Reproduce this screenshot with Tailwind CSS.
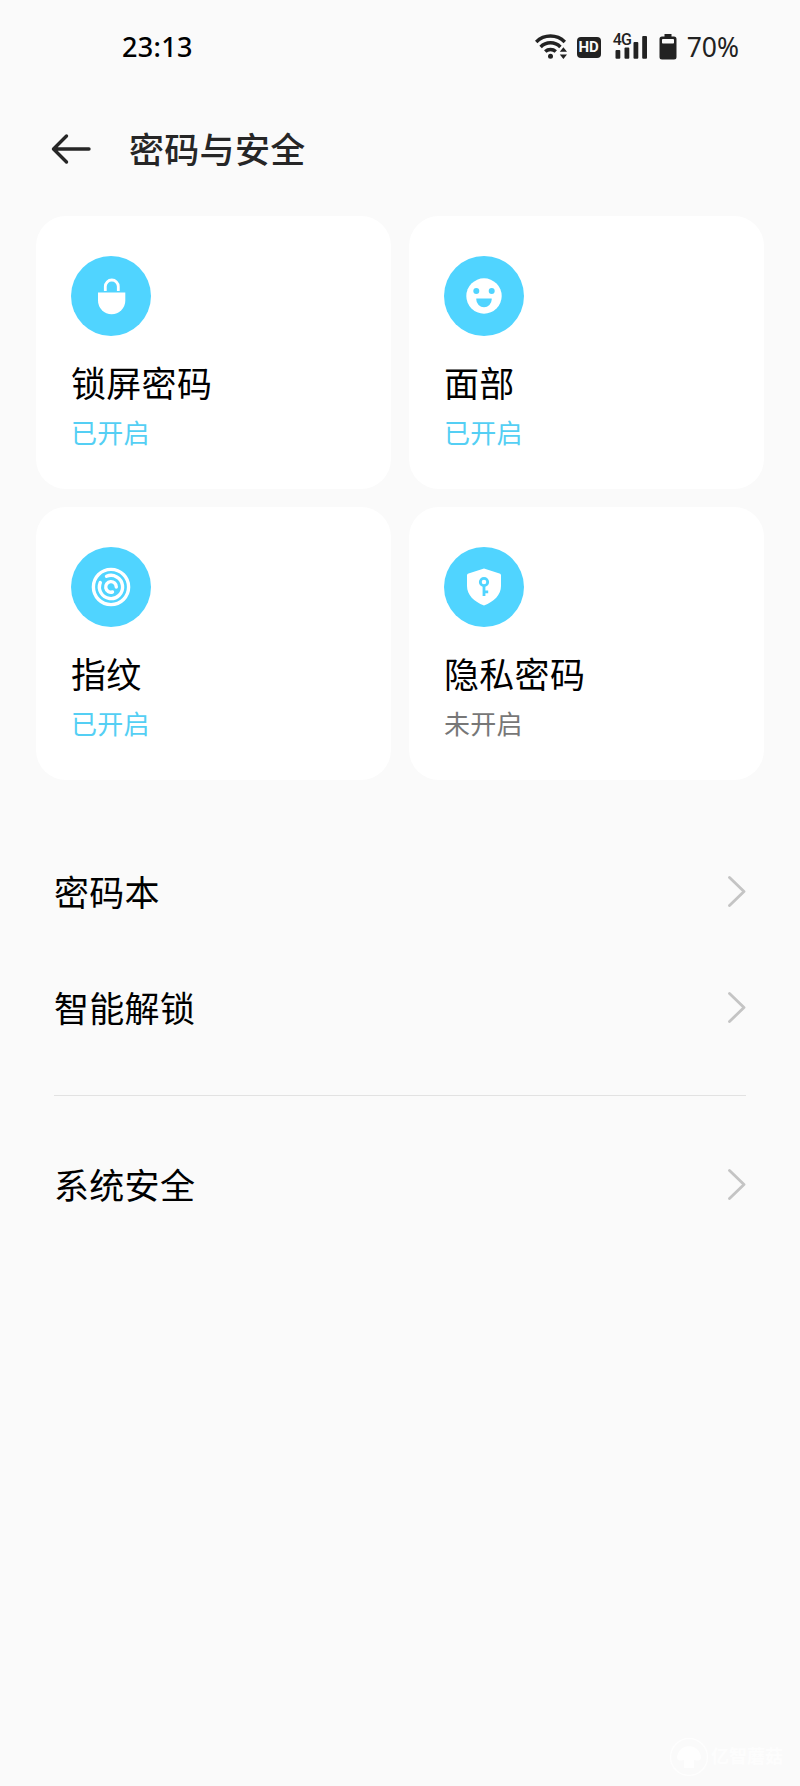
<!doctype html>
<html lang="zh-CN">
  <head>
    <meta charset="UTF-8" />
    <meta name="viewport" content="width=device-width, initial-scale=1.0" />
    <title>密码与安全</title>
    <script src="https://cdn.jsdelivr.net/npm/@tailwindcss/browser@4"></script>
  </head>

  <body class="bg-[#fafafa] h-[1786px] flex flex-col overflow-hidden text-black font-['Noto_Sans_CJK_SC',sans-serif]">
    <!-- Status bar -->
    <div class="h-[94px] shrink-0 flex items-center justify-between pl-[122px] pr-[61px] font-['Noto_Sans',sans-serif]">
      <span class="pb-px text-[27px] leading-none font-medium tracking-[0.3px]">23:13</span>
      <div class="flex items-center text-[#222]">
        <svg class="w-8 h-7" viewBox="0 0 32 28" fill="none" stroke="currentColor" stroke-width="3.5">
          <path d="M1.2 8.9a20.5 20.5 0 0 1 28.6 0" />
          <path d="M5.6 13.9a14 14 0 0 1 19.8 0" />
          <path d="M10.2 18.500a8 8 0 0 1 10.600 0" />
          <circle cx="15.5" cy="23.3" r="2.5" fill="currentColor" stroke="none" />
          <path d="M24.8 18.8l3.600-4.500 3.600 4.500zM24.800 21.400l3.600 4.500 3.600-4.500z" fill="currentColor" stroke="none" />
        </svg>
        <span class="ml-[10px] w-6 h-[21px] rounded bg-[#222] text-[#fafafa] text-[15px] leading-[21px] font-bold text-center font-[Roboto,sans-serif]">HD</span>
        <div class="ml-[12px] relative w-[34px] h-7">
          <svg class="w-[34px] h-7" viewBox="0 0 34 28" fill="currentColor">
            <rect x="2.5" y="17" width="4.8" height="8.8" rx="1" />
            <rect x="11.500" y="14.500" width="4.800" height="11.300" rx="1" />
            <rect x="20.500" y="9" width="4.800" height="16.800" rx="1" />
            <rect x="29.200" y="3" width="4.800" height="22.800" rx="1" />
          </svg>
          <span class="absolute left-0 -top-px text-[16px] leading-[16px] font-medium tracking-[-0.8px] font-[Roboto,sans-serif]">4G</span>
        </div>
        <svg class="ml-[12px] w-[18px] h-7" viewBox="0 0 18 28">
          <path d="M5.5 1h7v2.5H15A2.5 2.5 0 0 1 17.5 6v18a2.5 2.5 0 0 1-2.5 2.5H3A2.5 2.5 0 0 1 .5 24V6A2.5 2.5 0 0 1 3 3.5h2.5z" fill="currentColor" />
          <rect x="3" y="6" width="12" height="4.5" rx=".8" fill="#fafafa" />
        </svg>
        <span class="ml-[10px] text-[26.5px] leading-none">70%</span>
      </div>
    </div>

    <!-- Title bar -->
    <header class="h-[110px] shrink-0 flex items-center pl-[51px] text-[#262626]">
      <svg class="w-10 h-8" viewBox="0 0 40 32" fill="none" stroke="currentColor" stroke-width="3.4" stroke-linecap="round" stroke-linejoin="round">
        <path d="M38 16H3M15.500 3L2.500 16l13 13" />
      </svg>
      <h1 class="ml-[38px] pb-[3px] text-[35px] tracking-[0.3px] leading-none font-medium">密码与安全</h1>
    </header>

    <main class="flex flex-col">
      <section class="grid grid-cols-2 gap-[18px] px-9 pt-3">
        <div class="h-[273px] rounded-[30px] bg-white pl-[35px] pt-10">
          <svg class="size-20" viewBox="0 0 80 80">
            <circle cx="40" cy="40" r="40" fill="#50d4ff" />
            <path d="M34.3 35v-4.5a6.5 6.5 0 0 1 13 0V35" fill="none" stroke="#fff" stroke-width="2.8" />
            <path d="M27 36.5h27.3v8a13.65 13.65 0 0 1-27.3 0z" fill="#fff" />
          </svg>
          <h2 class="mt-7 text-[35px] tracking-[0.3px] leading-9">锁屏密码</h2>
          <p class="mt-[18px] text-[26px] tracking-[0.2px] leading-7 text-[#54cff4]">已开启</p>
        </div>

        <div class="h-[273px] rounded-[30px] bg-white pl-[35px] pt-10">
          <svg class="size-20" viewBox="0 0 80 80">
            <circle cx="40" cy="40" r="40" fill="#50d4ff" />
            <circle cx="40" cy="40" r="17.7" fill="#fff" />
            <g fill="#50d4ff">
              <circle cx="32.3" cy="35" r="3" />
              <circle cx="47.7" cy="35" r="3" />
              <path d="M32.3 42.5h15.4v1a7.7 7.7 0 0 1-15.4 0z" />
            </g>
          </svg>
          <h2 class="mt-7 text-[35px] tracking-[0.3px] leading-9">面部</h2>
          <p class="mt-[18px] text-[26px] tracking-[0.2px] leading-7 text-[#54cff4]">已开启</p>
        </div>

        <div class="h-[273px] rounded-[30px] bg-white pl-[35px] pt-10">
          <svg class="size-20" viewBox="0 0 80 80">
            <circle cx="40" cy="40" r="40" fill="#50d4ff" />
            <g fill="none" stroke="#fff" stroke-width="3.4" stroke-linecap="round">
              <circle cx="40" cy="40" r="17.6" />
              <path d="M35.5 29.3A11.6 11.6 0 1 1 29.3 35.5" />
              <path d="M41.5 45A5.3 5.3 0 1 1 45.3 40" />
            </g>
          </svg>
          <h2 class="mt-7 text-[35px] tracking-[0.3px] leading-9">指纹</h2>
          <p class="mt-[18px] text-[26px] tracking-[0.2px] leading-7 text-[#54cff4]">已开启</p>
        </div>

        <div class="h-[273px] rounded-[30px] bg-white pl-[35px] pt-10">
          <svg class="size-20" viewBox="0 0 80 80">
            <circle cx="40" cy="40" r="40" fill="#50d4ff" />
            <path d="M40 21.5l15.5 5c1 .3 1.500 1 1.500 2V39c0 9-7 15.500-17 19.500C30 54.500 23 48 23 39V28.500c0-1 .5-1.700 1.500-2z" fill="#fff" />
            <g fill="none" stroke="#50d4ff" stroke-width="2.8">
              <circle cx="40" cy="35" r="3.7" />
              <path d="M40 38.5V49M40 44.800h4.200" />
            </g>
          </svg>
          <h2 class="mt-7 text-[35px] tracking-[0.3px] leading-9">隐私密码</h2>
          <p class="mt-[18px] text-[26px] tracking-[0.2px] leading-7 text-[#777]">未开启</p>
        </div>
      </section>

      <section class="mt-[54px] px-[54px] text-[35px] tracking-[0.3px]">
        <div class="h-[116px] flex items-center justify-between">
          <span class="pb-[3px] leading-none">密码本</span>
          <svg class="w-[18px] h-8" viewBox="0 0 18 32" fill="none" stroke="#c4c4c4" stroke-width="2.8" stroke-linecap="round" stroke-linejoin="round"><path d="M1.5 1.5L16 15.5 1.5 29.5" /></svg>
        </div>
        <div class="h-[116px] flex items-center justify-between">
          <span class="pb-[3px] leading-none">智能解锁</span>
          <svg class="w-[18px] h-8" viewBox="0 0 18 32" fill="none" stroke="#c4c4c4" stroke-width="2.8" stroke-linecap="round" stroke-linejoin="round"><path d="M1.5 1.5L16 15.5 1.5 29.5" /></svg>
        </div>
        <div class="mt-[29px] mb-[31px] h-px bg-[#e2e2e2]"></div>
        <div class="h-[116px] flex items-center justify-between">
          <span class="pb-[3px] leading-none">系统安全</span>
          <svg class="w-[18px] h-8" viewBox="0 0 18 32" fill="none" stroke="#c4c4c4" stroke-width="2.8" stroke-linecap="round" stroke-linejoin="round"><path d="M1.5 1.5L16 15.5 1.5 29.5" /></svg>
        </div>
      </section>
    </main>

    <!-- Watermark -->
    <footer class="mt-auto mb-[9px] mr-[17px] flex items-center justify-end text-white/70">
      <svg class="size-10" viewBox="0 0 40 40">
        <circle cx="20" cy="20" r="18.5" fill="none" stroke="currentColor" stroke-width="1.5" />
        <path d="M8 21a12 12 0 0 1 24 0c0 3-4 3-7 2v8H15v-8c-3 1-7 1-7-2z" fill="currentColor" />
      </svg>
      <span class="ml-0.5 pb-1 text-[18px] leading-none font-bold">亿智蘑菇</span>
    </footer>
  </body>
</html>
